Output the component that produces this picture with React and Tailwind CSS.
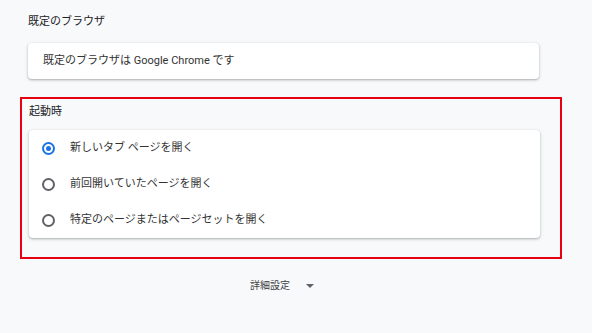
export default function App() {
  const options = [
    { label: '新しいタブ ページを開く', checked: true },
    { label: '前回開いていたページを開く', checked: false },
    { label: '特定のページまたはページセットを開く', checked: false },
  ];

  return (
    <div
      className="w-full h-[333px] bg-[#f8f9fa] text-[11px] text-[#333] overflow-hidden"
      style={{ fontFamily: 'Roboto, "Noto Sans CJK JP", sans-serif' }}
    >
      {/* 既定のブラウザ */}
      <div className="pl-[28px] pt-[14px]">
        <h2 className="h-[16px] leading-[16px] text-[#202124]">既定のブラウザ</h2>
        <div className="mt-[13px] w-[511px] h-[36px] bg-white rounded-[4px] shadow-[0_1px_2px_rgba(60,64,67,0.3),0_1px_3px_1px_rgba(60,64,67,0.1)] flex items-center pl-[15px]">
          既定のブラウザは Google Chrome です
        </div>
      </div>

      {/* 起動時 */}
      <div className="ml-[20px] mt-[18px] w-[542px] h-[162px] border-2 border-[#e60012] pl-[7px] pt-[5px]">
        <h2 className="h-[16px] leading-[16px] text-[#202124]">起動時</h2>
        <div className="mt-[10px] w-[511px] bg-white rounded-[4px] shadow-[0_1px_2px_rgba(60,64,67,0.3),0_1px_3px_1px_rgba(60,64,67,0.1)]">
          {options.map((o) => (
            <div key={o.label} className="h-[36px] flex items-center pl-[13px]">
              {o.checked ? (
                <span className="w-[13px] h-[13px] rounded-full border-2 border-[#1a73e8] flex items-center justify-center">
                  <span className="w-[5px] h-[5px] rounded-full bg-[#1a73e8]" />
                </span>
              ) : (
                <span className="w-[13px] h-[13px] rounded-full border-2 border-[#5f6368]" />
              )}
              <span className="ml-[15px]">{o.label}</span>
            </div>
          ))}
        </div>
      </div>

      {/* 詳細設定 */}
      <div className="mt-[19px] flex items-center pl-[250px]">
        <span className="text-[#3c4043] text-[10px]">詳細設定</span>
        <svg width="8" height="4" viewBox="0 0 8 4" className="ml-[16px]">
          <path d="M0 0 L8 0 L4 4 Z" fill="#5f6368" />
        </svg>
      </div>
    </div>
  );
}
